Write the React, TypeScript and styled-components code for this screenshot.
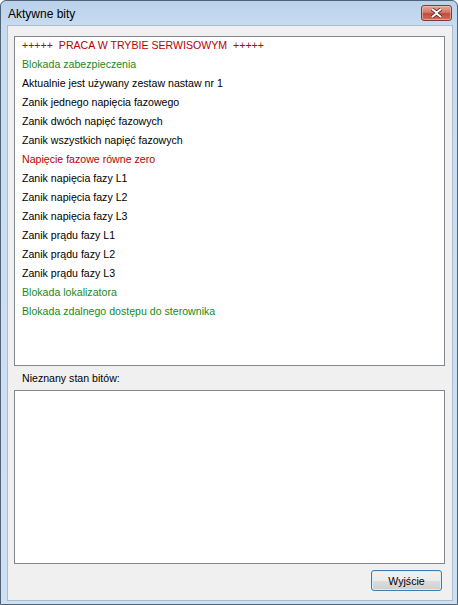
import React from "react";
import styled, { createGlobalStyle } from "styled-components";

const GlobalStyle = createGlobalStyle`
  html, body {
    margin: 0;
    padding: 0;
    background: #ffffff;
    overflow: hidden;
  }
`;

const Window = styled.div`
  width: 458px;
  height: 605px;
  box-sizing: border-box;
  border: 1px solid #4e6278;
  border-radius: 6px 6px 0 0;
  background: linear-gradient(to bottom, #b9d1ea 0px, #c9dcef 25px, #cfe0f1 100%);
  display: flex;
  flex-direction: column;
  font-family: "Liberation Sans", Arial, sans-serif;
  overflow: hidden;
`;

const TitleBar = styled.div`
  height: 24px;
  flex-shrink: 0;
  display: flex;
  align-items: flex-start;
  justify-content: space-between;
  padding: 0 5px 0 7px;
  box-sizing: border-box;
`;

const Title = styled.span`
  font-size: 12px;
  line-height: 14px;
  color: #000000;
  padding-top: 6px;
`;

const CloseButton = styled.div`
  width: 31px;
  height: 16px;
  margin-top: 4px;
  box-sizing: border-box;
  border: 1px solid #7a3b3b;
  border-radius: 3px;
  background: linear-gradient(to bottom, #e8a493 0%, #d27a6a 45%, #c24b3a 55%, #d0705c 100%);
  box-shadow: inset 0 0 0 1px rgba(255, 220, 210, 0.45);
  display: flex;
  align-items: center;
  justify-content: center;
`;

const Frame = styled.div`
  flex: 1;
  display: flex;
  padding: 0 4px 3px 6px;
  min-height: 0;
`;

const Client = styled.div`
  flex: 1;
  background: #f0f0f0;
  border: 1px solid #a9bdd3;
  display: flex;
  flex-direction: column;
  padding: 10px 7px 10px 6px;
  min-height: 0;
`;

const ListBox = styled.div<{ $height: number }>`
  height: ${(p) => p.$height}px;
  flex-shrink: 0;
  box-sizing: border-box;
  background: #ffffff;
  border: 1px solid #828790;
  padding: 0 0 0 7px;
`;

const Item = styled.div<{ $tone: "red" | "green" | "black" }>`
  height: 19px;
  line-height: 17px;
  font-size: 10.6px;
  white-space: pre;
  color: ${(p) => (p.$tone === "red" ? "#b80000" : p.$tone === "green" ? "#188a18" : "#000000")};
`;

const Label = styled.div`
  font-size: 10.6px;
  color: #000000;
  height: 24px;
  line-height: 25px;
  padding-left: 8px;
`;

const Footer = styled.div`
  display: flex;
  justify-content: flex-end;
  padding: 6px 3px 0 0;
`;

const Button = styled.button`
  width: 71px;
  height: 21px;
  box-sizing: border-box;
  border: 1px solid #3c7fb1;
  border-radius: 3px;
  background: linear-gradient(to bottom, #f2f2f2 0%, #ebebeb 50%, #dddddd 51%, #cfcfcf 100%);
  box-shadow: inset 0 0 0 1px #d6ecf8;
  font-family: "Liberation Sans", Arial, sans-serif;
  font-size: 10.6px;
  color: #000000;
  padding: 0;
`;

const items: { text: string; tone: "red" | "green" | "black" }[] = [
  { text: "+++++  PRACA W TRYBIE SERWISOWYM  +++++", tone: "red" },
  { text: "Blokada zabezpieczenia", tone: "green" },
  { text: "Aktualnie jest używany zestaw nastaw nr 1", tone: "black" },
  { text: "Zanik jednego napięcia fazowego", tone: "black" },
  { text: "Zanik dwóch napięć fazowych", tone: "black" },
  { text: "Zanik wszystkich napięć fazowych", tone: "black" },
  { text: "Napięcie fazowe równe zero", tone: "red" },
  { text: "Zanik napięcia fazy L1", tone: "black" },
  { text: "Zanik napięcia fazy L2", tone: "black" },
  { text: "Zanik napięcia fazy L3", tone: "black" },
  { text: "Zanik prądu fazy L1", tone: "black" },
  { text: "Zanik prądu fazy L2", tone: "black" },
  { text: "Zanik prądu fazy L3", tone: "black" },
  { text: "Blokada lokalizatora", tone: "green" },
  { text: "Blokada zdalnego dostępu do sterownika", tone: "green" },
];

export default function App() {
  return (
    <>
      <GlobalStyle />
      <Window>
        <TitleBar>
          <Title>Aktywne bity</Title>
          <CloseButton>
            <svg width="13" height="10" viewBox="0 0 13 10">
              <path
                d="M2 1 L6.5 4.5 L11 1 M2 9 L6.5 5.5 L11 9"
                stroke="#5a2a22"
                strokeWidth="3.6"
                fill="none"
              />
              <path
                d="M2 1 L6.5 4.5 L11 1 M2 9 L6.5 5.5 L11 9"
                stroke="#ffffff"
                strokeWidth="2"
                fill="none"
              />
            </svg>
          </CloseButton>
        </TitleBar>
        <Frame>
          <Client>
            <ListBox $height={330}>
              {items.map((it, i) => (
                <Item key={i} $tone={it.tone}>
                  {it.text}
                </Item>
              ))}
            </ListBox>
            <Label>Nieznany stan bitów:</Label>
            <ListBox $height={174} />
            <Footer>
              <Button>Wyjście</Button>
            </Footer>
          </Client>
        </Frame>
      </Window>
    </>
  );
}
